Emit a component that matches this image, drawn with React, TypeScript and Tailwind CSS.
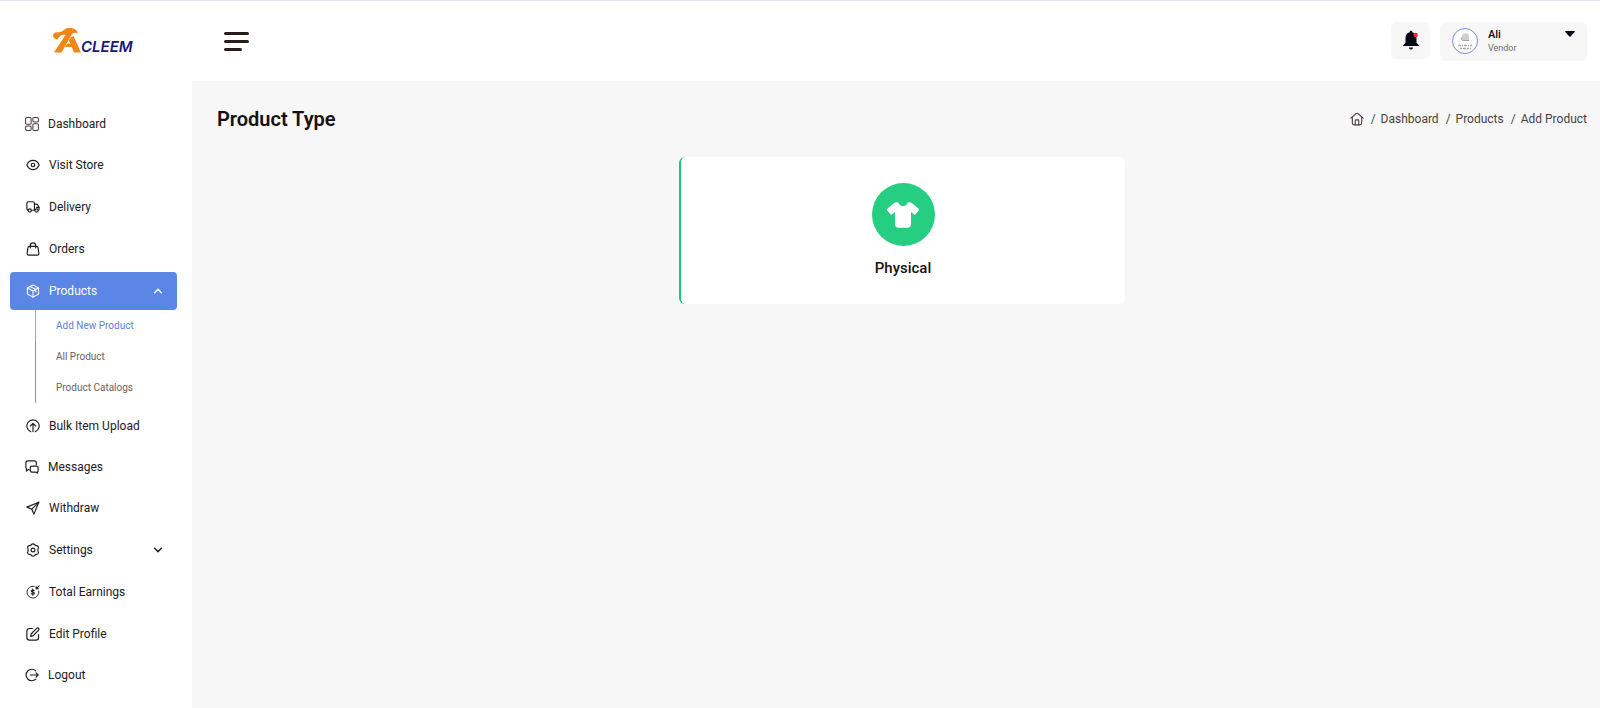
import React from "react";
import { FaShirt } from "react-icons/fa6";

type IconProps = { className?: string };

const Svg = ({ children, className = "size-3.5", sw = 2 }: { children: React.ReactNode; className?: string; sw?: number }) => (
  <svg viewBox="0 0 24 24" fill="none" stroke="currentColor" strokeWidth={sw} strokeLinecap="round" strokeLinejoin="round" className={className} aria-hidden="true">
    {children}
  </svg>
);

const DashIcon = () => (
  <svg viewBox="0 0 24 24" className="size-3.5 text-[#4a3b3b]" fill="none" stroke="currentColor" strokeWidth="1.800" aria-hidden="true">
    <rect x="1" y="1" width="9.500" height="11.500" rx="2" />
    <rect x="13.500" y="1" width="9.500" height="7.500" rx="2" />
    <rect x="13.500" y="11.500" width="9.500" height="11.500" rx="2" />
    <rect x="1" y="15.500" width="9.500" height="7.500" rx="2" />
  </svg>
);
const EyeIcon = () => (
  <Svg>
    <path d="M1.5 12C3.5 7 7.3 4.2 12 4.2S20.5 7 22.5 12c-2 5-5.800 7.800-10.500 7.800S3.500 17 1.500 12Z" />
    <circle cx="12" cy="12" r="3" />
  </Svg>
);
const TruckIcon = () => (
  <Svg>
    <path d="M3 17.500C1.800 17 1.500 16 1.500 15V6c0-2 1-3 3-3h7c2 0 3 1 3 3v11.500H9.500" />
    <path d="M14.500 7h3c1.300 0 2 .5 2.600 1.500l1.900 3.200c.4.600.5 1 .5 1.800V16c0 1-.5 1.500-1.500 1.500" />
    <path d="M22 12.500h-4" />
    <circle cx="6.500" cy="18" r="2.700" />
    <circle cx="18" cy="18" r="2.700" />
  </Svg>
);
const BagIcon = () => (
  <Svg>
    <path d="M6 7.500h12c1.500 0 2.400.8 2.600 2.200l1.400 9.800c.2 1.600-.8 3-2.500 3h-15c-1.700 0-2.700-1.400-2.500-3l1.400-9.800C3.600 8.300 4.500 7.500 6 7.500Z" />
    <path d="M7.500 10V6a4.500 4.500 0 0 1 9 0v4" />
  </Svg>
);
const BoxIcon = () => (
  <Svg sw={1.9}>
    <path d="M12 1.500 21.500 6.700v10.600L12 22.500 2.500 17.300V6.700Z" />
    <path d="M2.500 6.700 12 12l9.500-5.300M12 12v10.500M7.300 4.200l9.500 5.200v4.400" />
  </Svg>
);
const UploadIcon = () => (
  <Svg>
    <path d="M8 21.700a10.500 10.500 0 1 1 8 0" />
    <path d="M12 21.500V8M7.500 12 12 7.500l4.500 4.500" />
  </Svg>
);
const ChatIcon = () => (
  <Svg>
    <path d="M7 16.500H5.500L2.500 19v-4.500C1.800 14 1.500 13 1.500 12V5c0-2 1.200-3.500 3.300-3.500h11.400c2 0 3.300 1.500 3.300 3.500v3" />
    <path d="M12 10.500h7.500c1.800 0 3 1.200 3 3V18c0 1.200-.5 2-1.300 2.500v2l-2.500-1.700H12c-1.800 0-3-1-3-2.800v-4.500c0-1.800 1.200-3 3-3Z" />
  </Svg>
);
const SendIcon = () => (
  <Svg>
    <path d="M22 2 1.500 10.500l8.500 3.500 3.500 8.500Z" />
    <path d="M22 2 10 14" />
  </Svg>
);
const GearIcon = () => (
  <Svg>
    <path d="M12 1.500c1 0 2 .4 2.700 1.400.8 1.200 1.700 1.700 3.200 1.600 1.500 0 2.400.5 3 1.500.7 1.200.6 2.300-.1 3.400-.8 1.500-.8 3.700 0 5.200.7 1.100.8 2.200.1 3.400-.6 1-1.500 1.500-3 1.500-1.500-.1-2.400.4-3.200 1.600-.7 1-1.700 1.400-2.700 1.400s-2-.4-2.700-1.400c-.8-1.200-1.700-1.700-3.200-1.600-1.500 0-2.400-.5-3-1.500-.7-1.200-.6-2.300.1-3.400.8-1.500.8-3.700 0-5.200C2.500 8.300 2.400 7.200 3.100 6c.6-1 1.500-1.500 3-1.500 1.500.1 2.400-.4 3.200-1.600.7-1 1.700-1.400 2.700-1.400Z" />
    <circle cx="12" cy="12" r="3.300" />
  </Svg>
);
const EarningsIcon = () => (
  <Svg sw={1.6}>
    <path d="M14 2.200A10.200 10.200 0 1 0 22 10.500" />
    <path d="M14 9.800C13.600 8.900 12.800 8.500 11.500 8.500c-1.500 0-2.400.6-2.400 1.700 0 2.500 5.200 1.300 5.200 3.800 0 1.100-1 1.800-2.600 1.800-1.500 0-2.400-.5-2.800-1.500M11.600 7V17.500" strokeWidth="1.900" />
    <path d="M22.500 1.500 17.500 6.500M17.500 2.500v4h4" strokeWidth="1.900" />
  </Svg>
);
const EditIcon = () => (
  <Svg>
    <path d="M11 2.500H6c-3 0-4.500 1.500-4.500 4.500v11c0 3 1.500 4.500 4.500 4.500h11c3 0 4.500-1.500 4.500-4.500v-5" />
    <path d="M18.200 2.300c1.100-1.100 2.500-1 3.400-.1s1 2.300-.1 3.400L12 15.200 8 16l.8-4Z" />
  </Svg>
);
const LogoutIcon = () => (
  <Svg>
    <path d="M18.500 5a9.800 9.800 0 1 0 0 14" />
    <path d="M9 12h13.500M19 8.500l3.500 3.500-3.500 3.500" />
  </Svg>
);
const HomeIcon = ({ className }: IconProps) => (
  <Svg className={className} sw={1.9}>
    <path d="M1.500 10.500 10 3c1.300-1.100 2.700-1.100 4 0l8.500 7.500" />
    <path d="M4 9v10c0 1.800 1 3 3 3h10c2 0 3-1.200 3-3V9" />
    <path d="M9 22v-7c0-1 .5-1.500 1.500-1.500h3c1 0 1.500.5 1.500 1.500v7" />
  </Svg>
);
const Chevron = ({ up }: { up?: boolean }) => (
  <Svg className="size-2.5" sw={3.5}>
    <path d={up ? "M4 16l8-8 8 8" : "M4 8l8 8 8-8"} />
  </Svg>
);

const Logo = () => (
  <svg viewBox="0 0 84 28" className="h-7 w-[84px]" role="img" aria-label="Acleem">
    <path d="M0 8.500C.5 5.500 2.500 5 5 5.200 8 5.400 9.500 4 11.500 2.500 14 .8 17 .8 20 1.500c3 .7 4.600 2.500 4.500 5-2-1.200-4-1-5.500.5L8.500 25.500H1L12.500 8C9.500 7 6.500 8 4.500 12.500 2 12.300.2 11 0 8.500Z" fill="#f08519" />
    <path d="M17.500 10.500 20.500 9 28 25.500h-7L18.700 20H12l2.300-3.500h3l-1.500-3.300Z" fill="#f08519" />
    <text x="28" y="25" fontFamily="Inter, sans-serif" fontSize="15" fontWeight="600" fontStyle="italic" fill="#16167c">CLEEM</text>
  </svg>
);

type Item = { label: string; Icon: () => React.ReactElement; compact?: boolean };
const top: Item[] = [
  { label: "Dashboard", Icon: DashIcon, compact: true },
  { label: "Visit Store", Icon: EyeIcon },
  { label: "Delivery", Icon: TruckIcon },
  { label: "Orders", Icon: BagIcon },
];
const middle: Item[] = [
  { label: "Bulk Item Upload", Icon: UploadIcon },
  { label: "Messages", Icon: ChatIcon, compact: true },
  { label: "Withdraw", Icon: SendIcon },
];
const bottom: Item[] = [
  { label: "Total Earnings", Icon: EarningsIcon },
  { label: "Edit Profile", Icon: EditIcon },
  { label: "Logout", Icon: LogoutIcon, compact: true },
];

const NavLink = ({ label, Icon, compact }: Item) => (
  <li>
    <a href="#" className={compact ? "flex h-9 items-center gap-[9px] pl-[15px]" : "flex h-[38px] items-center gap-[9px] pl-4"}>
      <Icon />
      {label}
    </a>
  </li>
);

const crumbs = ["Dashboard", "Products", "Add Product"];

export default function App() {
  return (
    <div className="flex min-h-screen flex-col border-t border-[#dfe3f1] bg-white font-['Roboto',sans-serif] text-[12px] text-[#221a1c]">
      <header className="flex h-20 items-center">
        <a href="#" className="flex w-48 shrink-0 pl-[53px]"><Logo /></a>
        <button type="button" aria-label="Toggle menu" className="ml-8 flex flex-col gap-[5px] text-[#2a1c1d]">
          <span className="h-[3px] w-[25px] rounded-full bg-current" />
          <span className="h-[3px] w-[25px] rounded-full bg-current" />
          <span className="h-[3px] w-[18px] rounded-full bg-current" />
        </button>
        <div className="ml-auto flex items-start gap-2.5 pr-[13px]">
          <button type="button" aria-label="Notifications" className="flex h-[37px] w-[39px] items-center justify-center rounded-md bg-[#f7f7f7]">
            <svg viewBox="0 0 16 20" className="h-5 w-4" aria-hidden="true">
              <path d="M8 .8c.8 0 1.300.5 1.300 1.400C12 2.900 13.500 5 13.500 8v4.800l2.300 2.400v.9H.2v-.9l2.300-2.400V8c0-3 1.500-5.100 4.200-5.800C6.700 1.300 7.200.8 8 .8ZM6 17.400h4c0 1.200-.8 2-2 2s-2-.8-2-2Z" fill="#060a14" />
              <circle cx="12.600" cy="5" r="2.200" fill="#ff1f2d" />
            </svg>
          </button>
          <button type="button" className="flex h-[39px] w-[147px] items-center rounded-md bg-[#f7f7f7] px-3 text-left">
            <svg viewBox="0 0 26 26" className="size-[26px]" aria-hidden="true">
              <circle cx="13" cy="13" r="12.500" fill="#fff" stroke="#6f8fe6" />
              <path d="M9.500 9 11 5.500h5.500L17 9v3H9.500Z" fill="#cfcfcf" />
              <path d="M9 9.500 10.500 12.500H17" stroke="#a5a5a5" strokeWidth="1" fill="none" />
              <path d="M6 17.500h14" stroke="#a8a8a8" strokeWidth="1.300" strokeDasharray="3 1 1 1" />
              <path d="M8 20.500h11" stroke="#a8a8a8" strokeWidth="1.300" strokeDasharray="2 1 3 1" />
            </svg>
            <span className="ml-2.5 flex flex-col">
              <span className="text-[11px] leading-[14px] font-medium text-[#0d0a12]">Ali</span>
              <span className="text-[9px] leading-[13px] text-[#6b6d80]">Vendor</span>
            </span>
            <svg viewBox="0 0 10 6" className="mb-3.5 ml-auto h-1.5 w-2.5" aria-hidden="true">
              <path d="M.8 0h8.400c.7 0 1 .6.500 1.100L5.600 5.400c-.4.400-.8.400-1.200 0L.3 1.100C-.2.600.1 0 .8 0Z" fill="#060a14" />
            </svg>
          </button>
        </div>
      </header>

      <div className="flex flex-1">
        <nav aria-label="Main" className="w-48 shrink-0 pt-[25px] pr-[15px] pb-3 pl-2.5">
          <ul className="flex flex-col gap-1">
            {top.map((i) => <NavLink key={i.label} {...i} />)}
            <li>
              <button type="button" aria-expanded="true" className="flex h-[38px] w-full items-center gap-[9px] rounded bg-[#5b86e5] pr-3.5 pl-4 text-white">
                <BoxIcon />
                Products
                <span className="ml-auto"><Chevron up /></span>
              </button>
              <ul className="ml-[25px] text-[10px] text-[#6c6164]">
                <li className="flex h-[31px] items-center border-l border-[#8ba8ee] pl-5 text-[#5b7fe0]"><a href="#">Add New Product</a></li>
                <li className="flex h-[31px] items-center border-l border-[#9c9092] pl-5"><a href="#">All Product</a></li>
                <li className="flex h-[31px] items-center border-l border-[#9c9092] pl-5"><a href="#">Product Catalogs</a></li>
              </ul>
            </li>
            {middle.map((i) => <NavLink key={i.label} {...i} />)}
            <li>
              <button type="button" aria-expanded="false" className="flex h-[38px] w-full items-center gap-[9px] pr-3.5 pl-4">
                <GearIcon />
                Settings
                <span className="ml-auto"><Chevron /></span>
              </button>
            </li>
            {bottom.map((i) => <NavLink key={i.label} {...i} />)}
          </ul>
        </nav>

        <main className="flex-1 bg-[#f7f7f7] pr-[13px] pl-[25px]">
          <div className="flex h-[76px] items-center justify-between">
            <h1 className="text-[20px] font-semibold text-[#141013]">Product Type</h1>
            <nav aria-label="Breadcrumb">
              <ol className="flex items-center text-[#4a3f41]">
                <li><a href="#" aria-label="Home"><HomeIcon className="size-3.5" /></a></li>
                {crumbs.map((c) => (
                  <li key={c} className="flex">
                    <span className="mr-[5px] ml-[7px]">/</span>
                    <a href="#">{c}</a>
                  </li>
                ))}
              </ol>
            </nav>
          </div>
          <div className="flex justify-center">
            <div className="w-1/3 px-[5px]">
              <a href="#" className="flex flex-col items-center gap-2.5 rounded-md border-l-2 border-[#15cc78] bg-white pt-[26px] pb-6 text-[#1a1214]">
                <span className="flex size-[63px] items-center justify-center rounded-full bg-[#25ce81] text-white">
                  <FaShirt className="size-8" aria-hidden="true" />
                </span>
                <span className="text-[15px] leading-6 font-medium">Physical</span>
              </a>
            </div>
          </div>
        </main>
      </div>
    </div>
  );
}
